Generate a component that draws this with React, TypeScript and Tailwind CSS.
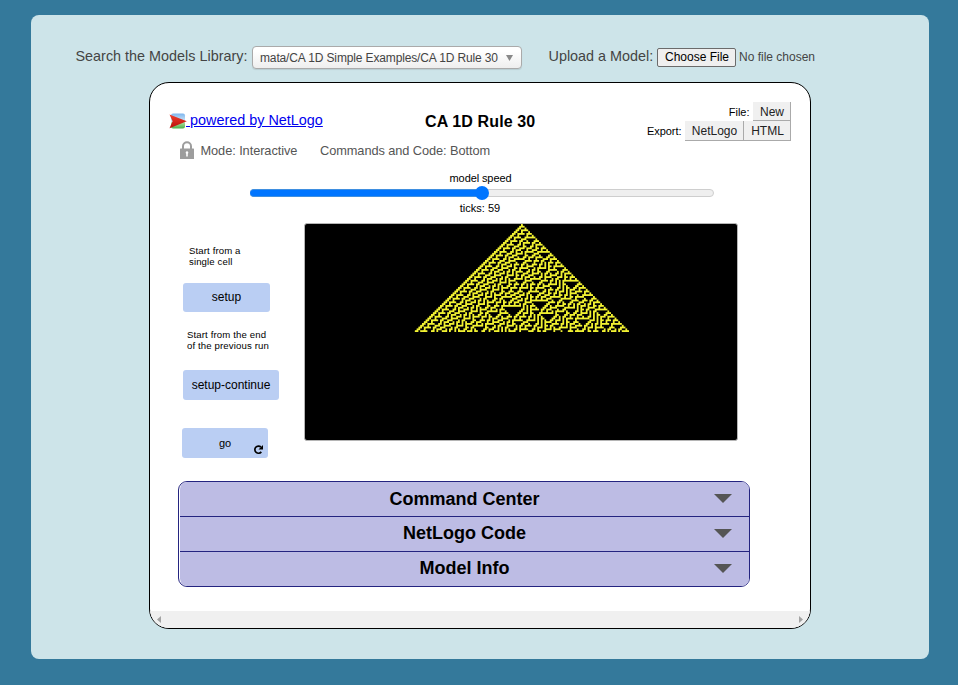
import React from 'react';

const TICKS = 59;
const COLS = 240;
const WORLD_W = 432;
const WORLD_H = 216;
const LEVELS = 10;

function rule30(ticks: number): number[][] {
  let row: number[] = new Array(COLS).fill(0);
  row[COLS / 2] = 1;
  const rows = [row];
  for (let t = 0; t < ticks; t++) {
    const prev = row;
    row = prev.map((c, i) => (prev[i - 1] ?? 0) ^ (c | (prev[i + 1] ?? 0)));
    rows.push(row);
  }
  return rows;
}

// Each patch is two units wide in the world buffer, which is scaled bilinearly to the view.
function worldPaths(): string[] {
  const rows = rule30(TICKS);
  const scale = (COLS * 2) / WORLD_W;
  const at = (x: number, y: number) => rows[Math.max(0, Math.floor(y / 2))]?.[Math.floor(x / 2)] ?? 0;
  const paths: string[] = new Array(LEVELS + 1).fill('');
  for (let py = 0; py < 110; py++) {
    const sy = (py + 0.5) * scale - 0.5;
    const y0 = Math.floor(sy);
    const fy = sy - y0;
    let runLevel = 0;
    let runStart = 0;
    for (let px = 0; px <= WORLD_W; px++) {
      let level = 0;
      if (px < WORLD_W) {
        const sx = (px + 0.5) * scale - 0.5;
        const x0 = Math.floor(sx);
        const fx = sx - x0;
        const top = at(x0, y0) * (1 - fx) + at(x0 + 1, y0) * fx;
        const bottom = at(x0, y0 + 1) * (1 - fx) + at(x0 + 1, y0 + 1) * fx;
        level = Math.round((top * (1 - fy) + bottom * fy) * LEVELS);
      }
      if (level !== runLevel) {
        if (runLevel > 0) paths[runLevel] += `M${runStart} ${py}h${px - runStart}v1h${runStart - px}z`;
        runLevel = level;
        runStart = px;
      }
    }
  }
  return paths;
}

function World() {
  return (
    <svg width={WORLD_W} height={WORLD_H} viewBox="0 0 432 216" shapeRendering="crispEdges" className="block">
      {worldPaths().map((d, level) =>
        d ? <path key={level} d={d} fill="#f1f131" fillOpacity={level / LEVELS} /> : null,
      )}
    </svg>
  );
}

function Logo() {
  return (
    <svg width="18" height="18" viewBox="0 0 18 18" className="block shrink-0">
      <defs>
        <linearGradient id="sky" x1="0" y1="0" x2="0" y2="1">
          <stop offset="0" stopColor="#7db5ee" />
          <stop offset="0.55" stopColor="#d5ebf7" />
          <stop offset="0.62" stopColor="#a9dc9b" />
          <stop offset="1" stopColor="#4cb04a" />
        </linearGradient>
        <linearGradient id="arrow" x1="0" y1="0" x2="0" y2="1">
          <stop offset="0" stopColor="#f0402c" />
          <stop offset="1" stopColor="#b80d0a" />
        </linearGradient>
      </defs>
      <rect x="2" y="1.5" width="14" height="15" rx="2" fill="url(#sky)" />
      <path d="M0.5 2.5L17.8 9.200L0.5 16.2L3.600 9.200z" fill="url(#arrow)" />
    </svg>
  );
}

function Lock() {
  return (
    <svg width="14" height="18" viewBox="0 0 14 18" className="block shrink-0">
      <path d="M3 9V5.2a4 4 0 0 1 8 0V9" fill="none" stroke="#9d9d9d" strokeWidth="2" />
      <rect x="0" y="7.5" width="14" height="10.5" rx="0.5" fill="#9d9d9d" />
      <path d="M7 10.3a1.4 1.4 0 0 1 .8 2.5V15.600H6.200V12.800A1.400 1.400 0 0 1 7 10.300z" fill="#fff" />
    </svg>
  );
}

function TabRow({ title, first, last }: { title: string; first?: boolean; last?: boolean }) {
  return (
    <div
      className={
        last
          ? 'flex h-[34px] items-center rounded-b-[7px] bg-[#bdbce4] pb-[2px]'
          : 'flex h-[35px] items-center border-b border-[#242480] bg-[#bdbce4] pb-px'
      }
    >
      <div
        className={
          first
            ? 'w-[534px] pt-px pl-[35px] text-center text-[18px] leading-[34px] font-bold text-black'
            : 'w-[534px] pl-[35px] text-center text-[18px] leading-[33px] font-bold text-black'
        }
      >
        {title}
      </div>
      <svg width="18" height="9" viewBox="0 0 18 9" className="block">
        <path d="M0 0h18L9 9z" fill="#555" />
      </svg>
    </div>
  );
}

export default function App() {
  return (
    <div className="h-[685px] w-[958px] overflow-hidden bg-[#34799b] px-[31px] pt-[15px] font-['Liberation_Sans',Arial,sans-serif] whitespace-nowrap">
      <div className="h-[644px] w-[898px] rounded-lg bg-[#cde4e9]">
        <div className="flex h-[67px] items-start pt-[31px] pl-[44px] text-[#444]">
          <div className="w-[177px] pl-[0.5px] text-[14.4px] leading-[20px]">Search the Models Library:</div>
          <div className="flex h-[23px] w-[270px] items-center rounded-[4px] border border-[#aaa] bg-linear-to-b from-white from-20% to-[#eee] pl-[7px] text-[12px] shadow-[0_1px_1px_rgba(0,0,0,0.1)]">
            <div className="w-[246px] tracking-[-0.14px]">mata/CA 1D Simple Examples/CA 1D Rule 30</div>
            <svg width="7" height="6" viewBox="0 0 7 6" className="block">
              <path d="M0 0h7L3.500 6z" fill="#888" />
            </svg>
          </div>
          <div className="w-[135px] pl-[26.5px] text-[14.4px] leading-[20px]">Upload a Model:</div>
          <div className="mt-[2px] h-[19px] w-[79px] rounded-[2px] border border-[#6b6b6b] bg-[#efefef] pl-px text-center text-[12px] leading-[17px] text-black">
            Choose File
          </div>
          <div className="mt-[2px] pl-[3px] text-[12px] leading-[19px]">No file chosen</div>
        </div>

        <div className="ml-[118px] flex h-[547px] w-[662px] flex-col overflow-hidden rounded-[20px] border border-black bg-white">
          <div className="flex h-[88px]">
            <div className="w-[275px] pt-[27px] pl-[19px]">
              <div className="flex h-[22px] items-center text-[14.4px] text-[#0000ee]">
                <Logo />
                <span className="-ml-px whitespace-pre underline"> powered by NetLogo</span>
              </div>
              <div className="mt-[8px] flex h-[20px] items-center pl-[11px] text-[12.8px] tracking-[-0.08px] text-[#555]">
                <Lock />
                <span className="w-[126px] shrink-0 pt-px pl-[6.5px]">Mode: Interactive</span>
                <span className="shrink-0 pt-px">Commands and Code: Bottom</span>
              </div>
            </div>
            <div className="w-[111px] pt-[29px] text-[16px] leading-[20px] font-bold tracking-[0.12px] text-black">CA 1D Rule 30</div>
            <div className="flex w-[255px] flex-col items-end pt-[19px] text-[11px] leading-[18px] text-black">
              <div className="flex items-center">
                <span className="pr-[3.5px]">File:</span>
                <span className="h-[19px] w-[38px] border-r border-b border-[#aaa] bg-[#f0f0f0] pl-px text-center text-[12px] leading-[20px] text-[#222]">New</span>
              </div>
              <div className="flex items-center">
                <span className="pr-[3.5px] tracking-[-0.05px]">Export:</span>
                <span className="h-[20px] w-[59px] border-r border-b border-[#aaa] bg-[#f0f0f0] pl-px text-center text-[12px] leading-[20px] text-[#222]">NetLogo</span>
                <span className="h-[20px] w-[47px] border-r border-b border-[#aaa] bg-[#f0f0f0] pl-px text-center text-[12px] leading-[20px] text-[#222]">HTML</span>
              </div>
            </div>
          </div>

          <div className="h-[52px] pl-[100px] text-[11px] leading-[14px] text-black">
            <div className="w-[461px] text-center tracking-[-0.1px]">model speed</div>
            <div className="mt-[4px] flex h-[8px] w-[464px] items-center rounded-full border border-[#cecece] bg-[#efefef]">
              <div className="-ml-px h-[8px] w-[226px] rounded-l-full border-y border-[#3f8fe0] bg-[#0075ff]" />
              <div className="-ml-px h-[14px] w-[14px] shrink-0 rounded-full bg-[#0075ff]" />
            </div>
            <div className="mt-[4px] w-[460px] text-center">ticks: 59</div>
          </div>

          <div className="flex h-[258px]">
            <div className="w-[154px] pl-[32px] text-black">
              <div className="pt-[22px] pl-[7px] text-[9.6px] leading-[11px] tracking-[0.12px]">
                Start from a<br />single cell
              </div>
              <div className="mt-[16px] ml-px h-[29px] w-[87px] rounded-[3px] bg-[#bacef3] text-center text-[12px] leading-[28px]">setup</div>
              <div className="mt-[17px] pl-[5px] text-[9.6px] leading-[11px] tracking-[0.13px]">
                Start from the end<br />of the previous run
              </div>
              <div className="mt-[19px] ml-px h-[30px] w-[96px] rounded-[3px] bg-[#bacef3] text-center text-[12px] leading-[30px]">setup-continue</div>
              <div className="mt-[28px] flex h-[30px] w-[86px] items-end rounded-[3px] bg-[#bacef3] pb-[3px]">
                <span className="w-[71px] pl-[37px] text-[11px] leading-[24px]">go</span>
                <svg width="11" height="11" viewBox="0 0 11 11" className="block">
                  <path d="M8.300 7.900A3.600 3.600 0 1 1 7.900 3" fill="none" stroke="#000" strokeWidth="1.700" />
                  <path d="M10 1v4.500H5.500z" fill="#000" />
                </svg>
              </div>
            </div>
            <div className="h-[218px] w-[434px] overflow-hidden rounded-[3px] border border-[#b5b5b5] bg-black">
              <World />
            </div>
          </div>

          <div className="ml-[28px] h-[106px] w-[572px] rounded-[9px] border border-[#242480] bg-white pl-px">
            <div className="overflow-hidden rounded-[7px]">
              <TabRow title="Command Center" first />
              <TabRow title="NetLogo Code" />
              <TabRow title="Model Info" last />
            </div>
          </div>

          <div className="mt-auto flex h-[17px] items-center justify-between bg-[#f0f0f0] px-[7px]">
            <svg width="4" height="7" viewBox="0 0 4 7" className="block">
              <path d="M4 0v7L0 3.500z" fill="#a3a3a3" />
            </svg>
            <svg width="4" height="7" viewBox="0 0 4 7" className="block">
              <path d="M0 0v7L4 3.500z" fill="#a3a3a3" />
            </svg>
          </div>
        </div>
      </div>
    </div>
  );
}
